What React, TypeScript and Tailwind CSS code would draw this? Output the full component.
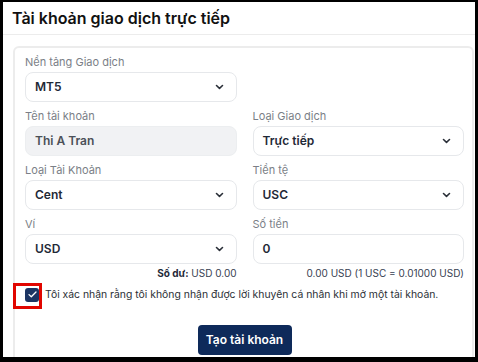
import React from "react";

const Chevron = () => (
  <svg width="9" height="6" viewBox="0 0 9 6" fill="none">
    <path d="M1.5 1.5 L4.5 4.3 L7.5 1.5" stroke="#2a2f38" strokeWidth="1.6" strokeLinecap="round" strokeLinejoin="round" />
  </svg>
);

const Label = ({ children }: { children: React.ReactNode }) => (
  <div className="text-[11px] leading-[14px] text-[#7b7f87] mb-[3px]">{children}</div>
);

const Select = ({ value }: { value: string }) => (
  <div className="h-[30px] rounded-[8px] border border-[#e6e8eb] bg-white flex items-center justify-between pl-[9px] pr-[12px]">
    <span className="text-[12px] font-semibold text-[#1f2937]">{value}</span>
    <Chevron />
  </div>
);

const Input = ({ value, disabled }: { value: string; disabled?: boolean }) => (
  <div
    className={
      "h-[30px] rounded-[8px] border flex items-center pl-[9px] " +
      (disabled ? "bg-[#f1f2f4] border-[#eceef0]" : "bg-white border-[#e6e8eb]")
    }
  >
    <span className={"text-[12px] font-semibold " + (disabled ? "text-[#4b5058]" : "text-[#1f2937]")}>{value}</span>
  </div>
);

export default function App() {
  return (
    <div
      className="w-[478px] h-[362px] bg-black pt-[2px] pl-[3px] pr-[3px] pb-[5px]"
      style={{ fontFamily: "Inter, 'Noto Sans', sans-serif" }}
    >
      <div className="w-full h-full bg-white flex flex-col overflow-hidden">
        <div className="h-[33px] shrink-0 border-b border-[#ececec] flex items-center px-[9px]">
          <span className="text-[16px] font-semibold text-[#111]">Tài khoản giao dịch trực tiếp</span>
        </div>
        <div className="flex-1 pt-[11px] pl-[10px] pr-[1px]">
          <div className="h-full border-l-2 border-t-2 border-r-2 border-[#ececec] rounded-t-[6px] pl-[10px] pr-[8px] pt-[7px]">
            <div className="grid grid-cols-2 gap-x-[16px] gap-y-[7px]">
              <div>
                <Label>Nền tảng Giao dịch</Label>
                <Select value="MT5" />
              </div>
              <div />
              <div>
                <Label>Tên tài khoản</Label>
                <Input value="Thi A Tran" disabled />
              </div>
              <div>
                <Label>Loại Giao dịch</Label>
                <Select value="Trực tiếp" />
              </div>
              <div>
                <Label>Loại Tài Khoản</Label>
                <Select value="Cent" />
              </div>
              <div>
                <Label>Tiền tệ</Label>
                <Select value="USC" />
              </div>
              <div>
                <Label>Ví</Label>
                <Select value="USD" />
                <div className="text-right text-[10px] leading-[14px] mt-[2px] text-[#374151]">
                  <span className="font-bold text-[#1f2937]">Số dư:</span> USD 0.00
                </div>
              </div>
              <div>
                <Label>Số tiền</Label>
                <Input value="0" />
                <div className="text-right text-[10px] leading-[14px] mt-[2px] text-[#374151]">
                  0.00 USD (1 USC = 0.01000 USD)
                </div>
              </div>
            </div>
            <div className="flex items-center mt-[7px] relative">
              <div className="w-[14px] h-[14px] rounded-[3px] bg-[#1c3563] flex items-center justify-center shrink-0">
                <svg width="9" height="7" viewBox="0 0 9 7" fill="none">
                  <path d="M1 3.6 L3.3 5.8 L8 1" stroke="white" strokeWidth="1.3" strokeLinecap="round" strokeLinejoin="round" />
                </svg>
              </div>
              <div className="absolute left-[-12px] top-[-4px] w-[29px] h-[26px] border-[3px] border-[#e10600]" />
              <span className="ml-[6px] text-[10.4px] text-[#2b2f36]">
                Tôi xác nhận rằng tôi không nhận được lời khuyên cá nhân khi mở một tài khoản.
              </span>
            </div>
            <div className="flex justify-center mt-[22px]">
              <div className="w-[94px] h-[30px] rounded-[4px] bg-[#0e2a5a] flex items-center justify-center">
                <span className="text-[12px] font-semibold text-white">Tạo tài khoản</span>
              </div>
            </div>
          </div>
        </div>
      </div>
    </div>
  );
}
